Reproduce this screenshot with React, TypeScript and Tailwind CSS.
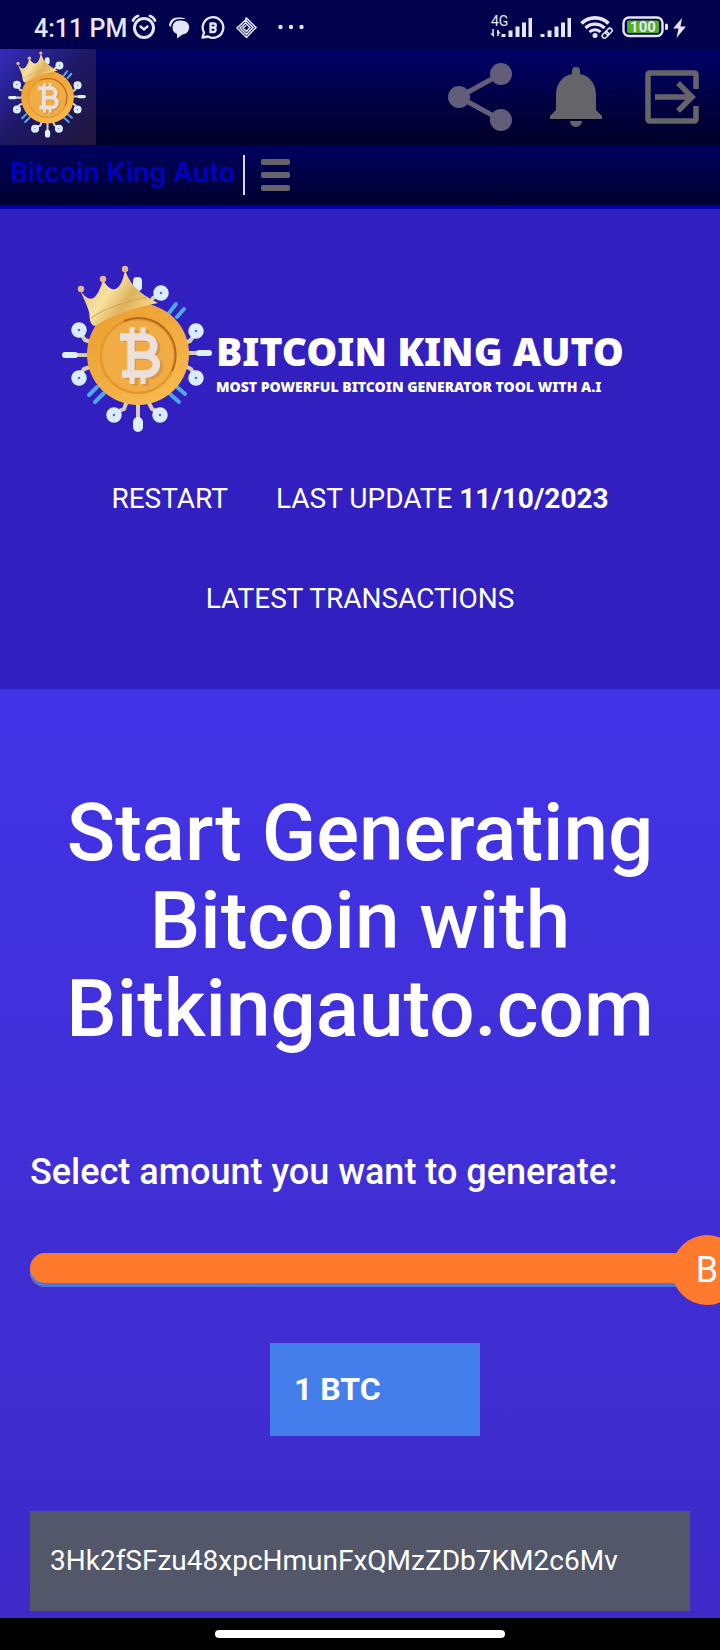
import { useId, useState } from "react";

function Coin({ className }: { className: string }) {
  const id = useId();
  return (
    <svg viewBox="0 0 150 168" className={className} aria-hidden="true">
      <defs>
        <linearGradient id={id + "c"} x1="0" y1="0" x2="0.6" y2="1">
          <stop offset="0" stopColor="#ea9f30" />
          <stop offset="0.5" stopColor="#f0a83c" />
          <stop offset="1" stopColor="#f7b84e" />
        </linearGradient>
        <linearGradient id={id + "k"} x1="0" y1="0" x2="1" y2="0.5">
          <stop offset="0" stopColor="#e3b65c" />
          <stop offset="0.45" stopColor="#f8e2a0" />
          <stop offset="0.7" stopColor="#dfb25c" />
          <stop offset="1" stopColor="#f4d88c" />
        </linearGradient>
      </defs>
      <g stroke="#d8cdb4" strokeWidth="4" fill="none" strokeLinecap="round">
        <path d="M14 90H28M122 88H138M76 136V152M19 69l4 6 6 2M18 110l4-6 6-2M133 69l-5 7-6 2M133 111l-4-7-6-3M54 147l8-3 3-8M97 147l-7-3-4-8M99 29l-8 4-4 6" />
      </g>
      <g stroke="#4fa9e8" strokeWidth="4" strokeLinecap="round">
        <path d="M107 48l7-9M115 52l7-8M27 130l8-8M33 137l9-9M108 129l9 8M115 122l8 7" />
      </g>
      <g fill="#4b6fc4" stroke="#dcecff" strokeWidth="6.5">
        <circle cx="99" cy="28" r="4.500" />
        <circle cx="17" cy="65" r="4.500" />
        <circle cx="134" cy="66" r="4.500" />
        <circle cx="17" cy="113" r="4.500" />
        <circle cx="134" cy="113" r="4.500" />
        <circle cx="52" cy="150" r="4.500" />
        <circle cx="98" cy="150" r="4.500" />
      </g>
      <g fill="#dcf0ff">
        <rect x="0" y="87" width="16" height="6" rx="3" />
        <rect x="134" y="85" width="16" height="6" rx="3" />
        <rect x="71" y="152" width="10" height="15" rx="5" />
        <rect x="71" y="12" width="9" height="14" rx="4" />
      </g>
      <circle cx="76" cy="89" r="51" fill={"url(#" + id + "c)"} />
      <circle cx="76" cy="91" r="37" fill="#f2ac45" stroke="#e2982f" strokeWidth="2.5" />
      <path d="M62 56A37 37 0 0 1 110 106" fill="none" stroke="#b9691b" strokeWidth="2" />
      <path
        d="M18 25C27 38 34 38 41 15C50 30 59 27 63 5C69 22 79 29 96 38C74 42 50 50 33 61C27 60 28 51 27 47C25 40 21 32 18 25Z"
        fill={"url(#" + id + "k)"}
      />
      <path d="M29 53C43 43 65 36 86 32" fill="none" stroke="#d2a54c" strokeWidth="1" />
      <g fill="#e2b78a">
        <circle cx="19" cy="24" r="3.2" />
        <circle cx="41" cy="14" r="3.2" />
        <circle cx="63" cy="4" r="3.2" />
      </g>
      <g transform="translate(3 2)" stroke="#c98a48" fill="none" strokeWidth="6" opacity="0.6">
        <path d="M58 72H82C96 72 96 90 82 90H68M82 90C100 90 99 110 82 110H60M68 72V110M70 63V72M81 63V72M70 111V119M81 111V119" />
      </g>
      <g stroke="#ece0dc" fill="none" strokeWidth="7.500">
        <path d="M58 72H82C95 72 95 90 82 90H69M82 90C99 90 98 109 82 109H60M69 72V110" />
        <path d="M70 62V71M81 62V71M70 110V119M81 110V119" strokeWidth="5" />
      </g>
    </svg>
  );
}

function StatusBar() {
  return (
    <div className="flex h-[49px] items-center justify-between bg-[#00004c] pr-8 pl-[34px] text-[#e6e6fa]">
      <div className="flex items-center pt-1">
        <span className="w-[92px] pt-1 text-[25px] leading-8 font-medium whitespace-nowrap">4:11 PM</span>
        <svg viewBox="0 0 175 26" className="ml-1 h-[26px] w-[175px]" fill="none" stroke="currentColor" aria-hidden="true">
          <g strokeWidth="3" strokeLinecap="round">
            <circle cx="14" cy="14" r="9.5" />
            <path d="M10.5 12.500l3.500 3 3.500-3" strokeWidth="2.400" />
            <path d="M3 6.500Q4.500 3 8 2M25 6.500Q23.500 3 20 2" strokeWidth="2.800" />
          </g>
          <g fill="currentColor" stroke="none">
            <path d="M39 11a8 8 0 0 1 8-7.500h4a8 6 0 0 1 5 1.500h-7q-7 0-8 8-2-1-2-2Z" />
            <path d="M49 6.500h2a7.500 7 0 0 1 1.500 14L47 24.500v-4.500a7 7 0 0 1 2-13.500Z" />
          </g>
          <path d="M72.500 23.500L74 18.500A10.300 10.300 0 1 1 78 22.500Z" strokeWidth="2.300" strokeLinejoin="round" />
          <path d="M80.500 9.500h3.300a2 2 0 0 1 0 4H80.500M83.800 13.500a2.300 2.300 0 0 1 0 4.500H80.500V8.500" strokeWidth="2.300" />
          <path
            strokeWidth="1.500"
            d="M116 3.500L126 13.500L116.500 23.500L107 14L115.500 6L123 13.500L116.500 20.500L110 14L115.500 9L120 13.500L116.500 17.500L113 14L116 11.500M116 3.500V7"
          />
          <g fill="currentColor" stroke="none">
            <circle cx="150.500" cy="13" r="2.200" />
            <circle cx="161" cy="13" r="2.200" />
            <circle cx="171.500" cy="13" r="2.200" />
          </g>
        </svg>
      </div>
      <svg viewBox="0 0 198 28" className="mt-1 h-7 w-[198px] shrink-0" fill="currentColor" aria-hidden="true">
        <text x="1" y="13" fontSize="14">4G</text>
        <path d="M3 16v6M8 17v6" stroke="currentColor" strokeWidth="1.500" />
        <path d="M0 20.500h4V24ZM7 17l4 3.500H7Z" />
        <path d="M11.500 21h4v3h-4ZM18.500 17.500h4v6.500h-4ZM25.500 13.500h4v10.500h-4ZM32 9.500h4v14.500h-4ZM38.500 5h3.500v19h-3.500Z" />
        <path d="M50.500 21h4v3h-4ZM57.500 17.500h4v6.500h-4ZM64.500 13.500h4v10.500h-4ZM71 9.500h4v14.500h-4ZM77.500 5h3.500v19h-3.500Z" />
        <g fill="none" stroke="currentColor">
          <path d="M91.500 10.500a19 19 0 0 1 27 0" strokeWidth="3.600" />
          <path d="M95.500 15a13.500 13.500 0 0 1 19 0" strokeWidth="3.200" />
          <path d="M99.500 19a8 8 0 0 1 11 0" strokeWidth="3" />
          <g transform="rotate(-45 117 20)" strokeWidth="1.500">
            <rect x="111" y="18" width="7" height="4.500" rx="2.200" />
            <rect x="116" y="18" width="7" height="4.500" rx="2.200" />
          </g>
          <rect x="133.500" y="4.500" width="39" height="18.500" rx="5.500" strokeWidth="2.400" />
        </g>
        <circle cx="105" cy="22.500" r="2.500" />
        <rect x="137" y="7.500" width="32" height="12.500" rx="1.500" fill="#4fae27" />
        <rect x="175" y="10.500" width="3" height="6.500" rx="1.500" />
        <text x="153" y="19" fontSize="15" fontWeight="700" textAnchor="middle">100</text>
        <path d="M192 5L183 15.500h5.500L186.500 25L196 13.500h-5.500Z" />
      </svg>
    </div>
  );
}

function AppBar() {
  return (
    <header>
      <div className="flex h-24 items-center bg-linear-to-b from-[#000068] to-[#000028] text-[#656468]">
        <div className="mr-auto flex h-24 w-24 bg-linear-to-br from-[#322cc0] via-[#1e1763] to-[#21163c] pt-0.5 pl-2">
          <Coin className="h-[87px] w-[78px]" />
        </div>
        <button type="button" aria-label="Share" className="flex h-24 w-24 items-center justify-center text-[#625d78]">
          <svg viewBox="0 0 64 70" className="h-[70px] w-16" fill="currentColor">
            <path d="M53 12L11 35L53 58" fill="none" stroke="currentColor" strokeWidth="5" />
            <circle cx="53" cy="12" r="11" />
            <circle cx="11" cy="35" r="11" />
            <circle cx="53" cy="58" r="11" />
          </svg>
        </button>
        <button type="button" aria-label="Notifications" className="flex h-24 w-24 items-center justify-center">
          <svg viewBox="0 0 52 60" className="h-[60px] w-[52px]" fill="currentColor">
            <path d="M22 4a4 4 0 0 1 8 0v3C40 9 46 17 46 28V43L52 49V52H0V49L6 43V28C6 17 12 9 22 7ZM20 54H32A6 6 0 0 1 20 54Z" />
          </svg>
        </button>
        <button type="button" aria-label="Exit" className="flex h-24 w-24 items-center justify-center">
          <svg viewBox="0 0 56 56" className="h-14 w-14" fill="none" stroke="currentColor" strokeWidth="5.500">
            <path d="M52 20V6Q52 4 50 4H6Q4 4 4 6V50Q4 52 6 52H50Q52 52 52 50V37" />
            <path d="M11 28H47M34 14L48 28L34 42" />
          </svg>
        </button>
      </div>
      <div className="flex h-16 items-center border-b-4 border-[#0000b0] bg-linear-to-b from-[#000060] to-[#000030] pl-[10px]">
        <span className="pb-1 font-['Inter','Roboto',sans-serif] text-[27px] leading-8 font-semibold text-[#0000c0]">
          Bitcoin King Auto
        </span>
        <span className="ml-2 h-10 w-0.5 bg-[#d8d8ec]" />
        <button type="button" aria-label="Menu" className="ml-4 flex w-[29px] flex-col gap-[7px]">
          <span className="h-[6px] rounded-xs bg-[#66646a]" />
          <span className="h-[6px] rounded-xs bg-[#66646a]" />
          <span className="h-[6px] rounded-xs bg-[#66646a]" />
        </button>
      </div>
    </header>
  );
}

function SiteHeader() {
  return (
    <div className="bg-[#311fbf] px-[62px] pt-14 pb-10 text-white">
      <a href="#top" className="flex items-center gap-1 font-['Noto_Sans',sans-serif] whitespace-nowrap">
        <Coin className="h-[168px] w-[150px] shrink-0" />
        <span className="flex flex-col pt-9">
          <span className="text-[39px] leading-10 font-black">BITCOIN KING AUTO</span>
          <span className="text-[14px] leading-8 font-black">MOST POWERFUL BITCOIN GENERATOR TOOL WITH A.I</span>
        </span>
      </a>
      <nav className="mt-4 flex flex-wrap justify-center text-[28px] leading-[100px]">
        <a href="#restart" className="px-6">RESTART</a>
        <a href="#update" className="px-6">
          LAST UPDATE <b className="font-bold">11/10/2023</b>
        </a>
        <a href="#transactions" className="px-6">LATEST TRANSACTIONS</a>
      </nav>
    </div>
  );
}

function Generator() {
  const [amount, setAmount] = useState(1);
  const [address, setAddress] = useState("3Hk2fSFzu48xpcHmunFxQMzZDb7KM2c6Mv");
  return (
    <main className="flex grow flex-col overflow-hidden bg-linear-to-b from-[#4134e6] to-[#3f2ac8] px-[30px] pt-[100px] pb-[7px] text-white">
      <h1 className="text-center text-[80px] leading-[88px] font-medium">
        Start Generating Bitcoin with Bitkingauto.com
      </h1>
      <label htmlFor="amount" className="mt-24 text-[36px] leading-[46px] font-medium">
        Select amount you want to generate:
      </label>
      <div className="relative mt-[58px] -mr-[52px] flex h-[34px] items-center">
        <input
          id="amount"
          type="range"
          min="0.1"
          max="1"
          step="0.1"
          value={amount}
          onChange={(e) => setAmount(Number(e.target.value))}
          className="m-0 h-[34px] w-full appearance-none rounded-[15px] bg-[#ff7a2d] shadow-[inset_0_-4px_0_#4a78e0] [&::-webkit-slider-thumb]:h-[70px] [&::-webkit-slider-thumb]:w-[70px] [&::-webkit-slider-thumb]:appearance-none [&::-webkit-slider-thumb]:rounded-full [&::-webkit-slider-thumb]:bg-[#ff7a2d]"
        />
        <span className="pointer-events-none absolute right-0 w-[70px] text-center text-[36px] leading-[70px]">B</span>
      </div>
      <div className="mt-14 flex justify-center pl-[30px]">
        <input
          aria-label="Selected amount"
          readOnly
          value={amount + " BTC"}
          className="h-[93px] w-[210px] bg-[#447eea] pb-0.5 pl-6 text-[32px] font-bold"
        />
      </div>
      <input
        aria-label="Bitcoin address"
        value={address}
        onChange={(e) => setAddress(e.target.value)}
        className="mt-[75px] h-[100px] w-full bg-[#525769] px-5 pb-0.5 text-[28px]"
      />
    </main>
  );
}

export default function App() {
  return (
    <div id="top" className="flex min-h-screen flex-col font-['Roboto','Noto_Sans',sans-serif]">
      <StatusBar />
      <AppBar />
      <SiteHeader />
      <Generator />
      <div className="flex h-8 items-center justify-center bg-black">
        <span className="h-2 w-[290px] rounded-full bg-white" />
      </div>
    </div>
  );
}
